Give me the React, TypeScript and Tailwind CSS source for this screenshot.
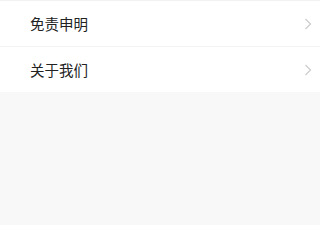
const rows = ['免责申明', '关于我们'];

const Chevron = () => (
  <svg width="8" height="12" viewBox="0 0 8 12" fill="none">
    <path d="M1.5 1 6.5 6l-5 5" stroke="#cccccc" strokeWidth="1.2" />
  </svg>
);

export default function App() {
  return (
    <div
      className="min-h-[225px] bg-[#f8f8f8]"
      style={{ fontFamily: '"Noto Sans CJK SC", "Noto Sans", sans-serif' }}
    >
      <div className="bg-white">
        {rows.map((r) => (
          <div
            key={r}
            className="flex h-[46px] items-center justify-between border-t border-[#f2f2f2] pl-[30px] pr-[8px]"
          >
            <span className="text-[14.5px] text-[#222]">{r}</span>
            <Chevron />
          </div>
        ))}
      </div>
    </div>
  );
}
